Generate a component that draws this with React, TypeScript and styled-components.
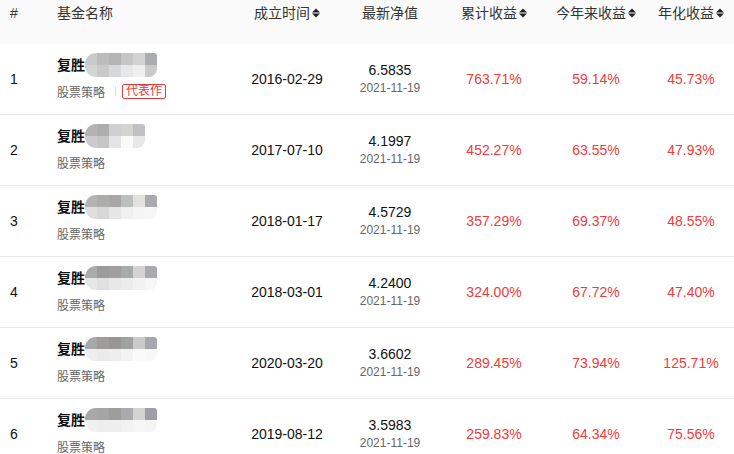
import React from "react";
import styled, { createGlobalStyle } from "styled-components";

const GlobalStyle = createGlobalStyle`
  html, body { margin: 0; padding: 0; background: #fff; }
  body {
    font-family: "Liberation Sans", "Noto Sans CJK SC", Arial, sans-serif;
    font-size: 14px;
    color: #222;
  }
`;

const COLS = "47px 200px 80px 126px 82px 122px 68px 1fr";

const Table = styled.div`
  width: 734px;
  height: 454px;
  overflow: hidden;
  background: #fff;
`;

const HeaderRow = styled.div`
  display: grid;
  grid-template-columns: ${COLS};
  height: 44px;
  background: #fafafa;
`;

const HeadCell = styled.div<{ $align?: "left" | "center" }>`
  display: flex;
  align-items: flex-start;
  justify-content: ${(p) => (p.$align === "left" ? "flex-start" : "center")};
  padding: 3px 0 0 ${(p) => (p.$align === "left" ? "10px" : "0")};
  line-height: 20px;
  font-size: 14px;
  color: #333;
  white-space: nowrap;
`;

const SortIcon = styled.svg`
  width: 8px;
  height: 10px;
  margin: 5px 0 0 2px;
  flex: none;
`;

const Row = styled.div`
  display: grid;
  grid-template-columns: ${COLS};
  height: 70px;
  border-bottom: 1px solid #e8e8e8;
`;

const Cell = styled.div<{ $align?: "left" | "center"; $red?: boolean }>`
  display: flex;
  flex-direction: column;
  justify-content: center;
  align-items: ${(p) => (p.$align === "left" ? "flex-start" : "center")};
  padding-left: ${(p) => (p.$align === "left" ? "10px" : "0")};
  font-size: 14px;
  line-height: 18px;
  color: ${(p) => (p.$red ? "#ef3b3b" : "#111")};
  white-space: nowrap;
`;

const NameCell = styled.div`
  display: flex;
  flex-direction: column;
  align-items: flex-start;
  padding: 9px 0 0 10px;
`;

const NameLine = styled.div`
  display: flex;
  align-items: center;
  height: 24px;
`;

const NameText = styled.span`
  font-size: 14px;
  font-weight: bold;
  color: #111;
  line-height: 24px;
`;

const Mosaic = styled.div`
  display: grid;
  grid-template-rows: 12px 12px;
  grid-auto-flow: column;
  grid-auto-columns: 12px;
  border-radius: 11px 3px 8px 11px;
  overflow: hidden;
  margin-left: 0px;
`;

const Block = styled.div`
  width: 12px;
  height: 12px;
`;

const SubLine = styled.div`
  display: flex;
  align-items: center;
  height: 18px;
  margin-top: 5px;
  font-size: 12px;
  color: #666;
`;

const Divider = styled.span`
  width: 1px;
  height: 10px;
  background: #ddd;
  margin: 0 6px 0 10px;
`;

const Tag = styled.span`
  border: 1px solid #e23b3b;
  border-radius: 2px;
  color: #e23b3b;
  font-size: 12px;
  line-height: 13px;
  padding: 0 3px;
`;

const NavValue = styled.span`
  font-size: 14px;
  line-height: 18px;
  color: #111;
`;

const NavDate = styled.span`
  font-size: 12px;
  line-height: 18px;
  color: #666;
`;

const Sort = () => (
  <SortIcon viewBox="0 0 8 10">
    <polygon points="0,4.4 4,0.4 8,4.4" fill="#222" />
    <polygon points="0,5.6 8,5.6 4,9.6" fill="#222" />
  </SortIcon>
);

type Fund = {
  top: string[];
  bottom: string[];
  tag?: boolean;
  date: string;
  nav: string;
  total: string;
  ytd: string;
  annual: string;
};

const funds: Fund[] = [
  {
    top: ["#cacaca", "#bcbcbc", "#b4b4b4", "#c4c6c8", "#d3d3d3", "#aaacaf"],
    bottom: ["#d4d4d4", "#c9c9c9", "#d5d9dc", "#e5e7e9", "#efefef", "#cacaca"],
    tag: true,
    date: "2016-02-29",
    nav: "6.5835",
    total: "763.71%",
    ytd: "59.14%",
    annual: "45.73%",
  },
  {
    top: ["#b5b2b2", "#adadad", "#d0d0d2", "#d5d2d0", "#bfbfc4"],
    bottom: ["#cbcbcb", "#c5c6c5", "#e4e4e6", "#fafafa", "#e8e8e8"],
    date: "2017-07-10",
    nav: "4.1997",
    total: "452.27%",
    ytd: "63.55%",
    annual: "47.93%",
  },
  {
    top: ["#b4b4b4", "#adadab", "#a8a6a6", "#bcbfbf", "#e3e0de", "#a9aab0"],
    bottom: ["#dedede", "#d8d8d8", "#e6e6e6", "#f0f0f0", "#f5f5f5", "#f6f6f6"],
    date: "2018-01-17",
    nav: "4.5729",
    total: "357.29%",
    ytd: "69.37%",
    annual: "48.55%",
  },
  {
    top: ["#ababab", "#9d9b99", "#a2a09e", "#a8abab", "#d5d3d1", "#a8aab0"],
    bottom: ["#e6e6e6", "#e0e0e0", "#e8e8e8", "#ececec", "#f2f2f2", "#f6f6f6"],
    date: "2018-03-01",
    nav: "4.2400",
    total: "324.00%",
    ytd: "67.72%",
    annual: "47.40%",
  },
  {
    top: ["#a8a8a8", "#9e9d9b", "#989694", "#a0a2a2", "#cacaca", "#a6a7ad"],
    bottom: ["#eeeeee", "#ebebeb", "#ededed", "#f3f3f3", "#fafafa", "#f8f8f8"],
    date: "2020-03-20",
    nav: "3.6602",
    total: "289.45%",
    ytd: "73.94%",
    annual: "125.71%",
  },
  {
    top: ["#a8a8a8", "#a6a6a6", "#9e9d9b", "#aaaaaf", "#d6d4d2", "#9d9ea6"],
    bottom: ["#f0f0f0", "#eeeeee", "#eeeeee", "#f2f2f2", "#f6f6f6", "#f4f4f4"],
    date: "2019-08-12",
    nav: "3.5983",
    total: "259.83%",
    ytd: "64.34%",
    annual: "75.56%",
  },
];

export default function App() {
  return (
    <>
      <GlobalStyle />
      <Table>
        <HeaderRow>
          <HeadCell $align="left">#</HeadCell>
          <HeadCell $align="left">基金名称</HeadCell>
          <HeadCell>
            成立时间
            <Sort />
          </HeadCell>
          <HeadCell>最新净值</HeadCell>
          <HeadCell>
            累计收益
            <Sort />
          </HeadCell>
          <HeadCell>
            今年来收益
            <Sort />
          </HeadCell>
          <HeadCell>
            年化收益
            <Sort />
          </HeadCell>
          <HeadCell />
        </HeaderRow>
        {funds.map((f, i) => (
          <Row key={i}>
            <Cell $align="left">{i + 1}</Cell>
            <NameCell>
              <NameLine>
                <NameText>复胜</NameText>
                <Mosaic>
                  {f.top.map((c, j) => (
                    <React.Fragment key={j}>
                      <Block style={{ background: c }} />
                      <Block style={{ background: f.bottom[j] }} />
                    </React.Fragment>
                  ))}
                </Mosaic>
              </NameLine>
              <SubLine>
                股票策略
                {f.tag && (
                  <>
                    <Divider />
                    <Tag>代表作</Tag>
                  </>
                )}
              </SubLine>
            </NameCell>
            <Cell>{f.date}</Cell>
            <Cell>
              <NavValue>{f.nav}</NavValue>
              <NavDate>2021-11-19</NavDate>
            </Cell>
            <Cell $red>{f.total}</Cell>
            <Cell $red>{f.ytd}</Cell>
            <Cell $red>{f.annual}</Cell>
            <Cell />
          </Row>
        ))}
      </Table>
    </>
  );
}
